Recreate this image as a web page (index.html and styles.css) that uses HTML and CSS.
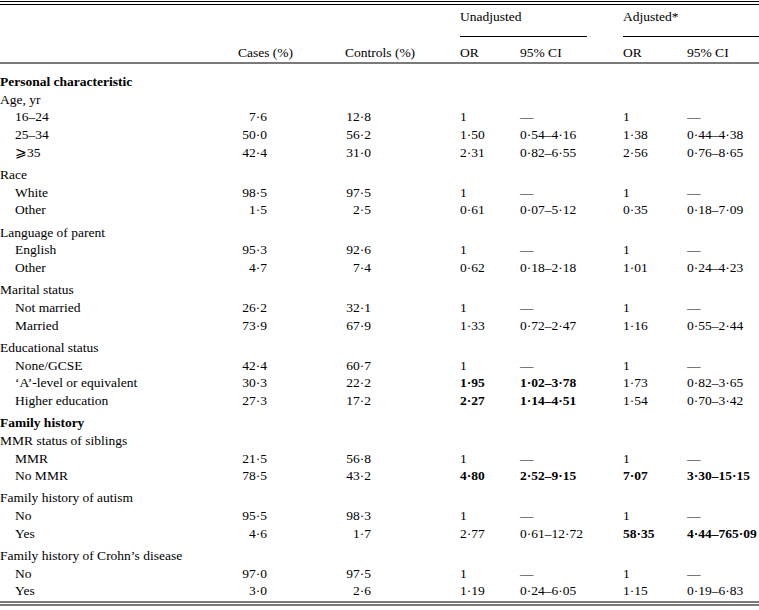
FILE: index.html
```html
<!DOCTYPE html>
<html lang="en">
<head>
<meta charset="utf-8">
<title>Table</title>
<link rel="stylesheet" href="styles.css">
</head>
<body>
<div class="sheet">
<table class="t">
<colgroup>
<col class="c-label"><col class="c-cases"><col class="c-ctrl"><col class="c-or"><col class="c-ci"><col class="c-aor"><col class="c-aci">
</colgroup>
<thead>
<tr class="h1"><th></th><th></th><th></th><th colspan="2"><div class="span-head unadj">Unadjusted</div></th><th colspan="2"><div class="span-head adj">Adjusted*</div></th></tr>
<tr class="h2"><th></th><th>Cases (%)</th><th>Controls (%)</th><th>OR</th><th>95% CI</th><th>OR</th><th>95% CI</th></tr>
</thead>
<tbody>
<tr class="first"><td class="b">Personal characteristic</td><td></td><td></td><td></td><td></td><td></td><td></td></tr>
<tr><td>Age, yr</td><td></td><td></td><td></td><td></td><td></td><td></td></tr>
<tr><td class="sub">16–24</td><td class="cs">7·6</td><td class="ct">12·8</td><td>1</td><td>—</td><td>1</td><td>—</td></tr>
<tr><td class="sub">25–34</td><td class="cs">50·0</td><td class="ct">56·2</td><td>1·50</td><td>0·54–4·16</td><td>1·38</td><td>0·44–4·38</td></tr>
<tr><td class="sub">⩾35</td><td class="cs">42·4</td><td class="ct">31·0</td><td>2·31</td><td>0·82–6·55</td><td>2·56</td><td>0·76–8·65</td></tr>
<tr class="grp"><td>Race</td><td></td><td></td><td></td><td></td><td></td><td></td></tr>
<tr><td class="sub">White</td><td class="cs">98·5</td><td class="ct">97·5</td><td>1</td><td>—</td><td>1</td><td>—</td></tr>
<tr><td class="sub">Other</td><td class="cs">1·5</td><td class="ct">2·5</td><td>0·61</td><td>0·07–5·12</td><td>0·35</td><td>0·18–7·09</td></tr>
<tr class="grp"><td>Language of parent</td><td></td><td></td><td></td><td></td><td></td><td></td></tr>
<tr><td class="sub">English</td><td class="cs">95·3</td><td class="ct">92·6</td><td>1</td><td>—</td><td>1</td><td>—</td></tr>
<tr><td class="sub">Other</td><td class="cs">4·7</td><td class="ct">7·4</td><td>0·62</td><td>0·18–2·18</td><td>1·01</td><td>0·24–4·23</td></tr>
<tr class="grp"><td>Marital status</td><td></td><td></td><td></td><td></td><td></td><td></td></tr>
<tr><td class="sub">Not married</td><td class="cs">26·2</td><td class="ct">32·1</td><td>1</td><td>—</td><td>1</td><td>—</td></tr>
<tr><td class="sub">Married</td><td class="cs">73·9</td><td class="ct">67·9</td><td>1·33</td><td>0·72–2·47</td><td>1·16</td><td>0·55–2·44</td></tr>
<tr class="grp"><td>Educational status</td><td></td><td></td><td></td><td></td><td></td><td></td></tr>
<tr><td class="sub">None/GCSE</td><td class="cs">42·4</td><td class="ct">60·7</td><td>1</td><td>—</td><td>1</td><td>—</td></tr>
<tr><td class="sub">‘A’-level or equivalent</td><td class="cs">30·3</td><td class="ct">22·2</td><td class="b">1·95</td><td class="b">1·02–3·78</td><td>1·73</td><td>0·82–3·65</td></tr>
<tr><td class="sub">Higher education</td><td class="cs">27·3</td><td class="ct">17·2</td><td class="b">2·27</td><td class="b">1·14–4·51</td><td>1·54</td><td>0·70–3·42</td></tr>
<tr class="grp"><td class="b">Family history</td><td></td><td></td><td></td><td></td><td></td><td></td></tr>
<tr><td>MMR status of siblings</td><td></td><td></td><td></td><td></td><td></td><td></td></tr>
<tr><td class="sub">MMR</td><td class="cs">21·5</td><td class="ct">56·8</td><td>1</td><td>—</td><td>1</td><td>—</td></tr>
<tr><td class="sub">No MMR</td><td class="cs">78·5</td><td class="ct">43·2</td><td class="b">4·80</td><td class="b">2·52–9·15</td><td class="b">7·07</td><td class="b">3·30–15·15</td></tr>
<tr class="grp"><td>Family history of autism</td><td></td><td></td><td></td><td></td><td></td><td></td></tr>
<tr><td class="sub">No</td><td class="cs">95·5</td><td class="ct">98·3</td><td>1</td><td>—</td><td>1</td><td>—</td></tr>
<tr><td class="sub">Yes</td><td class="cs">4·6</td><td class="ct">1·7</td><td>2·77</td><td>0·61–12·72</td><td class="b">58·35</td><td class="b">4·44–765·09</td></tr>
<tr class="grp"><td>Family history of Crohn’s disease</td><td></td><td></td><td></td><td></td><td></td><td></td></tr>
<tr><td class="sub">No</td><td class="cs">97·0</td><td class="ct">97·5</td><td>1</td><td>—</td><td>1</td><td>—</td></tr>
<tr class="last"><td class="sub">Yes</td><td class="cs">3·0</td><td class="ct">2·6</td><td>1·19</td><td>0·24–6·05</td><td>1·15</td><td>0·19–6·83</td></tr>
</tbody>
</table>
</div>
</body>
</html>
```

FILE: styles.css
```css
html, body {
  margin: 0;
  padding: 0;
  background: #fff;
}
body {
  font-family: "Liberation Serif", "DejaVu Serif", serif;
  font-size: 13.5px;
  color: #000;
}
.sheet {
  width: 759px;
  margin-top: 1px;
  border-top: 4px double #000;
  border-bottom: 5px double #7a7a7a;
}
.t {
  width: 759px;
  table-layout: fixed;
  border-collapse: separate;
  border-spacing: 0;
}
.c-label { width: 238px; }
.c-cases { width: 107px; }
.c-ctrl { width: 115px; }
.c-or { width: 60px; }
.c-ci { width: 103px; }
.c-aor { width: 64px; }
.c-aci { width: 72px; }

th, td {
  padding: 0;
  text-align: left;
  font-weight: normal;
  vertical-align: baseline;
  line-height: 17.7px;
  white-space: nowrap;
}
.h1 th {
  padding-top: 3px;
  line-height: 18px;
}
.span-head {
  padding-bottom: 10px;
  border-bottom: 1px solid #000;
}
.unadj { margin-right: 36px; }
.h2 th {
  padding-top: 7px;
  line-height: 18px;
  border-bottom: 2px solid #7a7a7a;
}
.first td { padding-top: 9px; }
.grp td { padding-top: 4.5px; }
.last td { padding-bottom: 1px; }
.sub { padding-left: 15px; }
.cs {
  text-align: right;
  padding-right: 78px;
}
.ct {
  text-align: right;
  padding-right: 89px;
}
.b { font-weight: bold; }
```
